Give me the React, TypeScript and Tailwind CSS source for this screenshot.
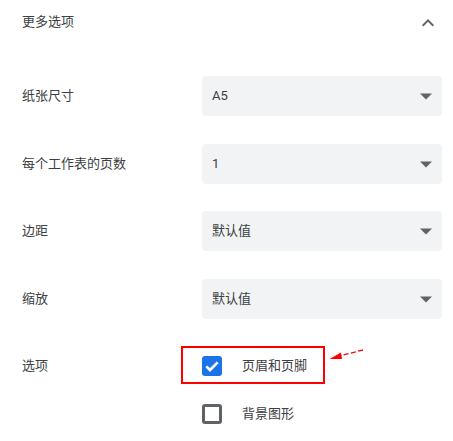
import { ReactNode } from "react";

const font = { fontFamily: 'Roboto, "Noto Sans CJK SC", sans-serif' };

function Caret() {
  return (
    <svg width="24" height="24" viewBox="0 0 24 24" className="shrink-0 text-[#5f6368]">
      <path d="M6 9.5l6 6 6-6z" fill="currentColor" />
    </svg>
  );
}

function Select({ value }: { value: string }) {
  return (
    <div className="flex h-10 w-[240px] items-center justify-between rounded-[4px] bg-[#f1f3f4] pl-[10px] pr-[4px] text-[13px] text-[#3c4043]">
      <span>{value}</span>
      <Caret />
    </div>
  );
}

function Row({ label, children, className = "" }: { label: string; children: ReactNode; className?: string }) {
  return (
    <div className={`flex items-center ${className}`}>
      <div className="w-[180px] text-[13px] text-[#3c4043]">{label}</div>
      {children}
    </div>
  );
}

function Checkbox({ checked, label }: { checked: boolean; label: string }) {
  return (
    <div className="flex h-5 items-center">
      {checked ? (
        <div className="flex h-5 w-5 items-center justify-center rounded-[3px] bg-[#1a73e8]">
          <svg width="16" height="16" viewBox="0 0 24 24">
            <path d="M3.5 12.5l5.5 5.5L20.5 6.5" fill="none" stroke="white" strokeWidth="4" />
          </svg>
        </div>
      ) : (
        <div className="h-5 w-5 rounded-[3px] border-[3px] border-[#5f6368]" />
      )}
      <span className="ml-5 text-[13px] text-[#3c4043]">{label}</span>
    </div>
  );
}

export default function App() {
  return (
    <div className="relative h-[441px] w-[453px] bg-white pl-[22px]" style={font}>
      <div className="flex h-11 items-center justify-between pr-[13px]">
        <span className="text-[13px] text-[#3c4043]">更多选项</span>
        <svg width="24" height="24" viewBox="0 0 24 24" className="mt-[1px] text-[#5f6368]">
          <path d="M12 8l-6 6 1.41 1.41L12 10.83l4.59 4.58L18 14z" fill="currentColor" />
        </svg>
      </div>

      <Row label="纸张尺寸" className="mt-8">
        <Select value="A5" />
      </Row>
      <Row label="每个工作表的页数" className="mt-7">
        <Select value="1" />
      </Row>
      <Row label="边距" className="mt-[27px]">
        <Select value="默认值" />
      </Row>
      <Row label="缩放" className="mt-7">
        <Select value="默认值" />
      </Row>

      <Row label="选项" className="mt-[37px]">
        <Checkbox checked label="页眉和页脚" />
      </Row>
      <div className="mt-7 pl-[180px]">
        <Checkbox checked={false} label="背景图形" />
      </div>

      {/* annotation */}
      <div className="absolute left-[181px] top-[346px] h-[38px] w-[144px] border-2 border-[#ff0000]" />
      <svg className="absolute left-[326px] top-[345px]" width="42" height="18" viewBox="0 0 42 18">
        <path d="M37 5L13 11" stroke="#ff0000" strokeWidth="1.3" strokeDasharray="5 2.5" />
        <path d="M3.5 14L15 7.5L16 14z" fill="#ff0000" />
      </svg>
    </div>
  );
}
